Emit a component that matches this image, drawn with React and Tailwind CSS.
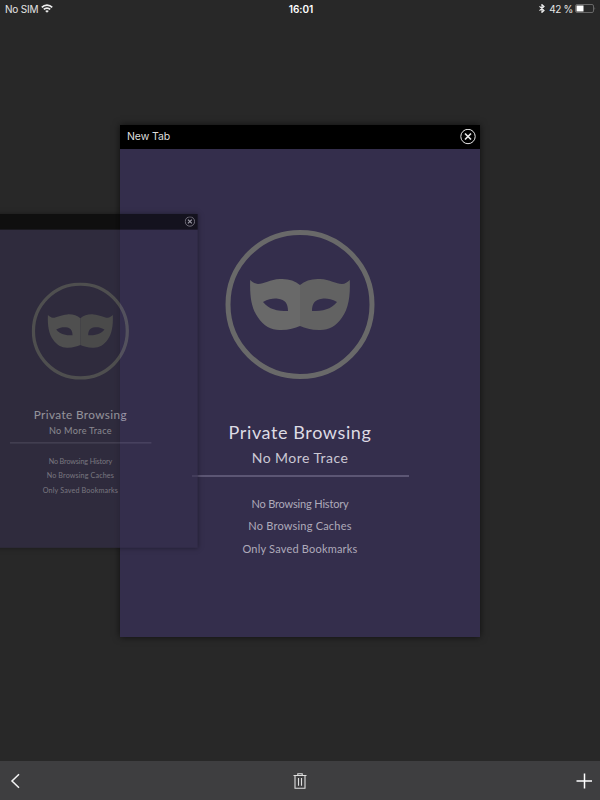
function CloseIcon() {
  return (
    <svg className="mb-[0.500px] h-4 w-4" viewBox="0 0 16 16" fill="none" stroke="#e8e8e8">
      <circle cx="8" cy="7.500" r="7.2" strokeWidth="1" />
      <path d="M5 4.500L11 10.500M11 4.500L5 10.500" strokeWidth="1.7" />
    </svg>
  );
}

function MaskBadge() {
  return (
    <svg className="mt-[81px] h-[150px] w-[150px] shrink-0" viewBox="0 0 150 150">
      <circle cx="75" cy="74.500" r="72" fill="none" stroke="#696969" strokeWidth="5" />
      <g transform="translate(0 -0.500)">
        <path
          fill="#696969"
          fillRule="evenodd"
          d="M75 55.5C70 51 63 49 55 49.5C45 50 39 54.5 33 54.5C30 54.5 27.500 52.500 25.200 50.500C24.600 67 26.500 79 33 88C39 97 47 101 56 100.500C64 100.500 70 98.500 75 96.500ZM38 72.500C44 69.300 49 68.700 53 69.300C60 70 63 74 63 81.500C52 81.500 44 80 38 72.500Z"
        />
        <path
          fill="#626262"
          fillRule="evenodd"
          d="M75 55.500C80 51 87 49 95 49.500C105 50 111 54.500 117 54.500C120 54.500 122.500 52.500 124.800 50.500C125.400 67 123.500 79 117 88C111 97 103 101 94 100.500C86 100.500 80 98.500 75 96.500ZM112 72.500C106 69.300 101 68.700 97 69.300C90 70 87 74 87 81.500C98 81.500 106 80 112 72.500Z"
        />
      </g>
    </svg>
  );
}

function TabCard({ title, className }) {
  return (
    <section
      className={`absolute flex h-[512px] w-[360px] flex-col bg-[#342e4c] shadow-[0_0_7px_rgba(0,0,0,0.65)] ${className}`}
    >
      <header className="flex h-[23.500px] shrink-0 items-center justify-between bg-black pr-1 pl-[7px]">
        <span className="pt-px font-['Inter','Liberation_Sans',sans-serif] text-[10.500px] leading-4 tracking-[-0.1px] text-[#dedede]">{title}</span>
        <CloseIcon />
      </header>
      <div className="flex flex-col items-center whitespace-nowrap font-['Lato','Liberation_Sans',sans-serif]">
        <MaskBadge />
        <h1 className="mt-[40px] text-[18px] leading-6 tracking-[0.600px] text-[#dddbe4]">Private Browsing</h1>
        <h2 className="mt-[4px] text-[14px] leading-5 tracking-[0.450px] text-[#cbc8d4]">No More Trace</h2>
        <hr className="mt-[7px] h-[2px] w-[217px] border-0 bg-[#5c5674]" />
        <ul className="mt-[16.500px] text-center text-[11px] leading-[22.300px] font-normal text-[#aeaaba]">
          <li className="tracking-[-0.170px]">No Browsing History</li>
          <li className="tracking-[0.200px]">No Browsing Caches</li>
          <li className="tracking-[0.200px]">Only Saved Bookmarks</li>
        </ul>
      </div>
    </section>
  );
}

function StatusBar() {
  return (
    <div className="grid h-[17px] grid-cols-3 items-center whitespace-nowrap px-[5px] font-['Inter','Liberation_Sans',sans-serif] text-[10px] leading-4 text-[#e4e4e4]">
      <div className="flex items-center">
        <span className="w-[36px] tracking-[-0.2px]">No SIM</span>
        <svg className="h-[9px] w-[12px]" viewBox="0 0 12 9" fill="none" stroke="#eeeeee" strokeWidth="1.700">
          <path d="M.8 3.300C3.700.3 8.300.3 11.200 3.300M2.800 5.400C4.600 3.600 7.400 3.600 9.200 5.400" />
          <path d="M6 8.800L4.200 7C5.200 6.100 6.800 6.100 7.800 7Z" fill="#eeeeee" stroke="none" />
        </svg>
      </div>
      <span className="pl-[2px] text-center font-semibold tracking-[-0.05px] text-white">16:01</span>
      <div className="flex items-center justify-end">
        <svg className="mr-[4px] h-[9px] w-[6px]" viewBox="0 0 6 9" fill="none" stroke="#eeeeee" strokeWidth="1.200">
          <path d="M.5 2.400L5 6.400L3 8.300V.7L5 2.600L.5 6.600" />
        </svg>
        <span className="tracking-[-0.350px]">42 %</span>
        <svg className="mr-[-1px] ml-[2px] h-[9px] w-[21px]" viewBox="0 0 21 9">
          <rect x=".5" y=".5" width="18" height="8" rx="1.500" fill="none" stroke="#686868" />
          <rect x="1.500" y="1.500" width="7" height="6" fill="#ffffff" />
          <path d="M19.500 3Q21 4.500 19.500 6Z" fill="#686868" />
        </svg>
      </div>
    </div>
  );
}

export default function App() {
  return (
    <div className="relative flex h-[800px] w-[600px] flex-col overflow-hidden bg-[#282828]">
      <StatusBar />
      <main className="flex-1">
        <TabCard title="New Tab" className="top-[125px] left-[120px]" />
        <TabCard title="" className="top-[214px] left-[-37px] origin-top-left scale-[0.652] opacity-60" />
      </main>
      <nav className="grid h-[39px] grid-cols-3 items-center bg-[#3e3e40]">
        <button className="justify-self-start pl-[10px]" aria-label="Back">
          <svg className="h-4 w-[10px]" viewBox="0 0 10 16" fill="none" stroke="#f5f5f5" strokeWidth="1.500">
            <path d="M9 1.300L2 8L9 14.700" />
          </svg>
        </button>
        <button className="justify-self-center" aria-label="Delete">
          <svg className="h-4 w-[14px]" viewBox="0 0 14 16" fill="none" stroke="#dedede" strokeWidth="1.100">
            <path d="M.5 2.500H13.500M4.800 2.500V.7H9.200V2.500M2 2.500V15.300H12V2.500M5.500 5V12.800M8.500 5V12.800" />
          </svg>
        </button>
        <button className="justify-self-end pr-[8px]" aria-label="Add">
          <svg className="h-4 w-4" viewBox="0 0 16 16" fill="none" stroke="#ffffff" strokeWidth="1.500">
            <path d="M8.500 .5V15.500M.5 8H16" />
          </svg>
        </button>
      </nav>
    </div>
  );
}
